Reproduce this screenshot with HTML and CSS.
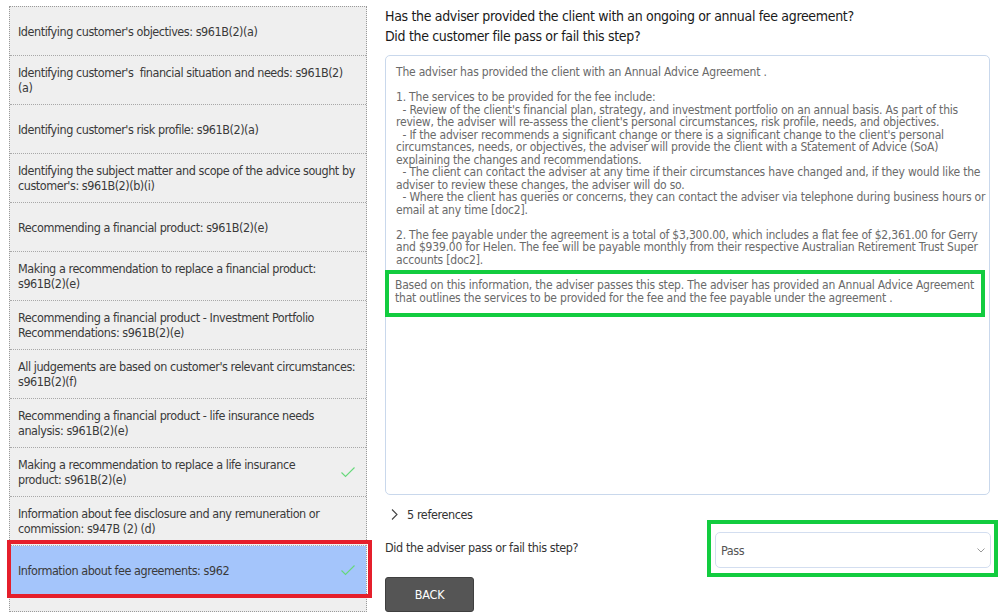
FILE: index.html
```html
<!DOCTYPE html>
<html lang="en">
<head>
<meta charset="utf-8">
<title>Fee agreement review</title>
<link rel="stylesheet" href="styles.css">
</head>
<body>
<div class="page">
  <ul class="steps">
    <li class="step"><span class="step-text">Identifying customer's objectives: s961B(2)(a)</span></li>
    <li class="step"><span class="step-text">Identifying customer's &nbsp;financial situation and needs: s961B(2)<br>(a)</span></li>
    <li class="step"><span class="step-text">Identifying customer's risk profile: s961B(2)(a)</span></li>
    <li class="step"><span class="step-text">Identifying the subject matter and scope of the advice sought by<br>customer's: s961B(2)(b)(i)</span></li>
    <li class="step"><span class="step-text">Recommending a financial product: s961B(2)(e)</span></li>
    <li class="step"><span class="step-text">Making a recommendation to replace a financial product:<br>s961B(2)(e)</span></li>
    <li class="step"><span class="step-text">Recommending a financial product - Investment Portfolio<br>Recommendations: s961B(2)(e)</span></li>
    <li class="step"><span class="step-text">All judgements are based on customer's relevant circumstances:<br>s961B(2)(f)</span></li>
    <li class="step"><span class="step-text">Recommending a financial product - life insurance needs<br>analysis: s961B(2)(e)</span></li>
    <li class="step"><span class="step-text">Making a recommendation to replace a life insurance<br>product: s961B(2)(e)</span>
      <svg class="check" width="14" height="11" viewBox="0 0 14 11"><polyline points="0.5,5.5 4.5,9.5 13.5,0.5" fill="none" stroke="#66d97a" stroke-width="1.1"/></svg></li>
    <li class="step"><span class="step-text">Information about fee disclosure and any remuneration or<br>commission: s947B (2) (d)</span></li>
    <li class="step step-active"><span class="step-text">Information about fee agreements: s962</span>
      <svg class="check" width="14" height="11" viewBox="0 0 14 11"><polyline points="0.5,5.5 4.5,9.5 13.5,0.5" fill="none" stroke="#66d97a" stroke-width="1.1"/></svg></li>
  </ul>

  <main class="detail">
    <h1 class="question">Has the adviser provided the client with an ongoing or annual fee agreement?<br>Did the customer file pass or fail this step?</h1>

    <div class="answer">
<div class="answer-text">The adviser has provided the client with an Annual Advice Agreement .

1. The services to be provided for the fee include:
  - Review of the client's financial plan, strategy, and investment portfolio on an annual basis. As part of this
review, the adviser will re-assess the client's personal circumstances, risk profile, needs, and objectives.
  - If the adviser recommends a significant change or there is a significant change to the client's personal
circumstances, needs, or objectives, the adviser will provide the client with a Statement of Advice (SoA)
explaining the changes and recommendations.
  - The client can contact the adviser at any time if their circumstances have changed and, if they would like the
adviser to review these changes, the adviser will do so.
  - Where the client has queries or concerns, they can contact the adviser via telephone during business hours or
email at any time [doc2].

2. The fee payable under the agreement is a total of $3,300.00, which includes a flat fee of $2,361.00 for Gerry
and $939.00 for Helen. The fee will be payable monthly from their respective Australian Retirement Trust Super
accounts [doc2].</div>
<div class="answer-text conclusion">Based on this information, the adviser passes this step. The adviser has provided an Annual Advice Agreement
that outlines the services to be provided for the fee and the fee payable under the agreement .</div>
    </div>

    <div class="refs">
      <svg class="chev" width="7" height="11" viewBox="0 0 7 11"><polyline points="1,0.5 6,5.5 1,10.5" fill="none" stroke="#444" stroke-width="1.1"/></svg>
      <span>5 references</span>
    </div>

    <div class="verdict">
      <span class="verdict-label">Did the adviser pass or fail this step?</span>
      <div class="select-wrap">
        <div class="select">
          <span>Pass</span>
          <svg width="8" height="5" viewBox="0 0 8 5"><polyline points="0.5,0.5 4,4 7.5,0.5" fill="none" stroke="#999" stroke-width="1"/></svg>
        </div>
      </div>
    </div>

    <button class="back" type="button">BACK</button>
  </main>
</div>
</body>
</html>
```

FILE: styles.css
```css
* { box-sizing: border-box; }

body {
  margin: 0;
  background: #ffffff;
  font-family: "DejaVu Sans Condensed", "DejaVu Sans", "Liberation Sans", sans-serif;
  font-stretch: condensed;
  color: #333;
}

.page {
  display: flex;
  gap: 18px;
  padding: 6px 0 0 9px;
}

.steps {
  list-style: none;
  margin: 0;
  padding: 0;
  width: 358px;
  flex: none;
  border: 1px dotted #9a9a9a;
  background: #efefef;
}

.step {
  position: relative;
  display: flex;
  align-items: center;
  justify-content: space-between;
  height: 49px;
  padding: 0 11px 0 8px;
  border-bottom: 1px dotted #a8a8a8;
  font-size: 12.5px;
  letter-spacing: -0.45px;
  line-height: 15px;
  color: #3a3a3a;
}

.step-text {
  white-space: nowrap;
}

.step:last-child { border-bottom: none; }

.step-active {
  background: #a4c5fb;
}

.step-active::after {
  content: "";
  position: absolute;
  left: -3px;
  right: -6px;
  top: -6px;
  bottom: -3px;
  border: 4px solid #e51f2b;
  pointer-events: none;
}

.check { flex: none; }

.detail {
  width: 606px;
  flex: none;
  display: flex;
  flex-direction: column;
  align-items: flex-start;
}

.question {
  margin: 0;
  font-size: 14px;
  letter-spacing: -0.33px;
  line-height: 20px;
  font-weight: normal;
  color: #1a1a1a;
}

.answer {
  margin-top: 9px;
  width: 605px;
  height: 440px;
  border: 1px solid #c9d8ec;
  border-radius: 5px;
  padding: 10px 4px 10px 10px;
  font-size: 12px;
  letter-spacing: -0.2px;
  line-height: 12.5px;
  color: #6a6a6a;
}

.answer-text {
  white-space: pre;
}

.conclusion {
  margin: 4px 0 0 -11px;
  border: 4px solid #12cc3f;
  padding: 5px 6px 9px 6px;
}

.refs {
  display: flex;
  align-items: center;
  gap: 9px;
  margin-top: 11px;
  padding-left: 6px;
  height: 16px;
  font-size: 12.5px;
  letter-spacing: -0.4px;
  color: #333;
}

.verdict {
  display: flex;
  align-items: center;
  justify-content: space-between;
  width: 606px;
  margin-top: 10px;
}

.verdict-label {
  font-size: 12.5px;
  letter-spacing: -0.4px;
  color: #333;
  margin-top: -5px;
}

.select-wrap {
  position: relative;
}

.select-wrap::after {
  content: "";
  position: absolute;
  left: -8px;
  right: -7px;
  top: -12px;
  bottom: -9px;
  border: 4px solid #12cc3f;
  pointer-events: none;
}

.select {
  display: flex;
  align-items: center;
  justify-content: space-between;
  width: 276px;
  height: 36px;
  padding: 0 5px 0 5px;
  border: 1px solid #d3def0;
  border-radius: 5px;
  background: #fff;
  font-size: 12.5px;
  letter-spacing: -0.4px;
  color: #555;
}

.back {
  margin-top: 9px;
  width: 89px;
  height: 35px;
  border: 1px solid #3f3f3f;
  border-radius: 3px;
  background: #555555;
  color: #ffffff;
  font-family: inherit;
  font-stretch: condensed;
  font-size: 12.5px;
  letter-spacing: -0.2px;
  font-weight: 500;
  cursor: pointer;
}
```
